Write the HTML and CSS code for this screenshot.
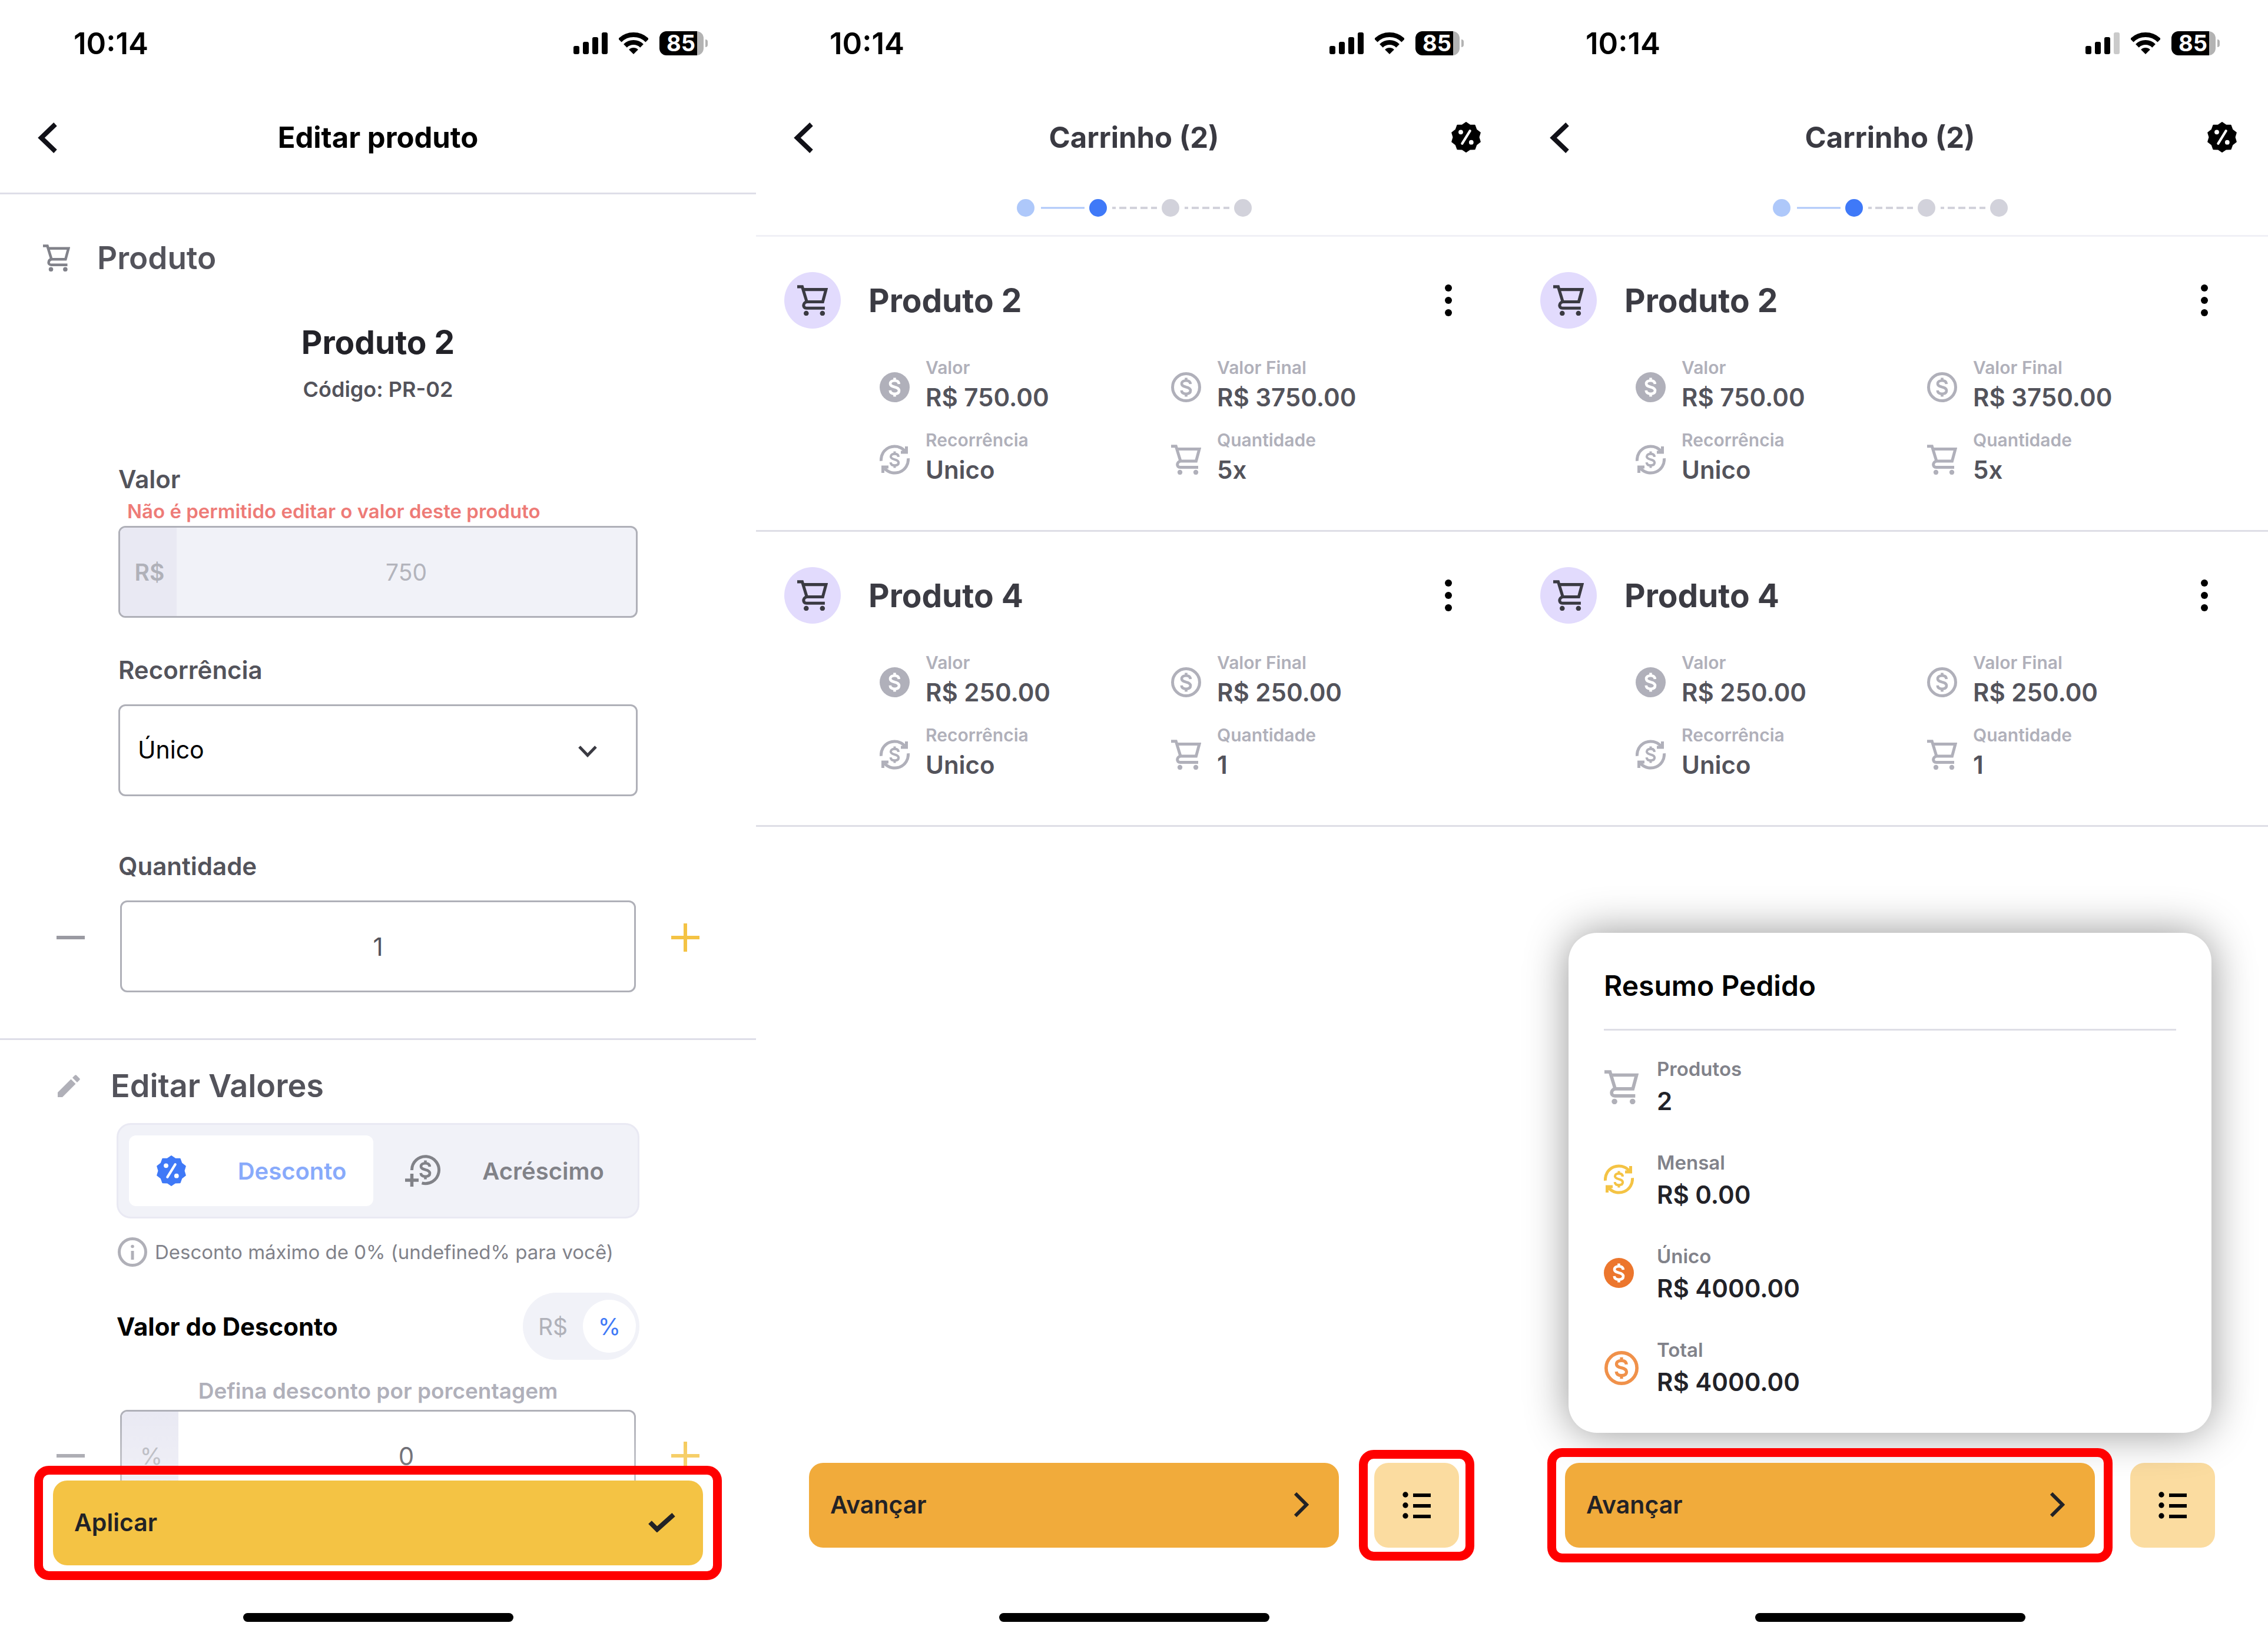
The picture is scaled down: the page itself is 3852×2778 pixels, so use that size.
FILE: index.html
```html
<!DOCTYPE html>
<html lang="pt-BR">
<head>
<meta charset="utf-8">
<meta name="viewport" content="width=device-width, initial-scale=1">
<title>Carrinho</title>
<link rel="stylesheet" href="styles.css">
</head>
<body>
<svg class="sprite" aria-hidden="true">
  <symbol id="back" viewBox="0 0 34 52"><path d="M30 3 6 26 30 49" fill="none" stroke="currentColor" stroke-width="8"/></symbol>
  <symbol id="dollar" viewBox="0 0 51 51"><path d="M32.8 20.2C32.6 16.200 30 14.300 25.500 14.300 21 14.300 18 16.200 18 19.500 18 23.300 22 24.200 25.500 25.200 30 26.300 33 27.600 33 31.300 33 35 30 36.700 25.500 36.700 21 36.700 18 34.800 17.700 30.800M25.500 9.500V14M25.500 37V41.500" fill="none" stroke="currentColor" stroke-width="4.600"/></symbol>
  <symbol id="cart" viewBox="0 0 51 51"><g fill="none" stroke="currentColor" stroke-width="5"><path d="M0 2.800H8.300L16 28"/><path d="M9.500 7.500H48L42.500 28H16C9.500 29 8.500 38.500 15.500 38.500H46"/></g><circle cx="15" cy="47" r="4.200"/><circle cx="42" cy="47" r="4.200"/></symbol>
  <symbol id="coin" viewBox="0 0 51 51"><circle cx="25.500" cy="25.500" r="25.500"/><use href="#dollar" width="51" height="51" color="#fff"/></symbol>
  <symbol id="ring" viewBox="0 0 51 51"><circle cx="25.500" cy="25.500" r="23" fill="none" stroke="currentColor" stroke-width="5"/><use href="#dollar" width="51" height="51"/></symbol>
  <symbol id="recur" viewBox="0 0 51 51"><g fill="none" stroke="currentColor" stroke-width="5"><path d="M2.500 27.800A23 23 0 0 1 42.500 10.500M45.500 3V13H36"/><path d="M48.500 23.200A23 23 0 0 1 8.500 40.500M5.500 48V38H15"/></g><use href="#dollar" x="3" y="3" width="45" height="45"/></symbol>
  <symbol id="badge" viewBox="0 0 52 52"><path d="M26 1 32.600 5.600 40.700 5.800 43.400 13.400 49.800 18.300 47.500 26 49.800 33.700 43.400 38.600 40.700 46.200 32.600 46.400 26 51 19.400 46.400 11.300 46.200 8.600 38.600 2.200 33.700 4.500 26 2.200 18.300 8.600 13.400 11.300 5.800 19.400 5.600Z" stroke="currentColor" stroke-width="2" stroke-linejoin="round"/><path d="M19.300 36.800 32.700 15.200" stroke="#fff" stroke-width="4.200" stroke-linecap="round"/><circle cx="17" cy="17.300" r="3.900" fill="#fff"/><circle cx="34.800" cy="34.700" r="3.900" fill="#fff"/></symbol>
  <symbol id="addcoin" viewBox="0 0 60 54"><path d="M11.500 26A23 23 0 1 1 28.500 47.900" fill="none" stroke="currentColor" stroke-width="5"/><path d="M11.500 32V54M0 43H23" stroke="currentColor" stroke-width="5.500"/><use href="#dollar" x="9" y="0" width="51" height="51"/></symbol>
  <symbol id="info" viewBox="0 0 50 50"><circle cx="25" cy="25" r="22.500" fill="none" stroke="currentColor" stroke-width="5"/><circle cx="25" cy="15.500" r="2.800"/><path d="M25 23V38" stroke="currentColor" stroke-width="5"/></symbol>
  <symbol id="pencil" viewBox="0 0 38 38"><path d="M0 30 22.500 7.500 30.500 15.500 8 38H0ZM25 5 29 1Q30.500-.5 32 1L37 6Q38.500 7.500 37 9L33 13Z"/></symbol>
  <symbol id="minus" viewBox="0 0 48 48"><path d="M0 24H48" stroke="currentColor" stroke-width="6"/></symbol>
  <symbol id="plus" viewBox="0 0 48 48"><path d="M0 24H48M24 0V48" stroke="currentColor" stroke-width="6"/></symbol>
  <symbol id="check" viewBox="0 0 46 33"><path d="M3 16 15 28 43 3" fill="none" stroke="currentColor" stroke-width="8"/></symbol>
  <symbol id="down" viewBox="0 0 32 20"><path d="M2 2 16 16.500 30 2" fill="none" stroke="currentColor" stroke-width="5"/></symbol>
  <symbol id="next" viewBox="0 0 26 42"><path d="M3 2 22 21 3 40" fill="none" stroke="currentColor" stroke-width="6"/></symbol>
  <symbol id="list" viewBox="0 0 48 46"><circle cx="5" cy="5" r="4.700"/><circle cx="5" cy="23" r="4.700"/><circle cx="5" cy="41" r="4.700"/><path d="M18 6H48M18 24H48M18 42H48" stroke="currentColor" stroke-width="6"/></symbol>
  <symbol id="kebab" viewBox="0 0 12 54"><circle cx="6" cy="6" r="6"/><circle cx="6" cy="27" r="6"/><circle cx="6" cy="48" r="6"/></symbol>
  <symbol id="wifi" viewBox="0 0 50 37"><g fill="none" stroke="currentColor"><path d="M1.700 13.700A33 33 0 0 1 48.300 13.700" stroke-width="8"/><path d="M10.900 22.900A20 20 0 0 1 39.100 22.900" stroke-width="8"/></g><path d="M25 37 17.200 29.200A11 11 0 0 1 32.800 29.200Z"/></symbol>
  <symbol id="bars" viewBox="0 0 58 37"><rect y="23" width="10" height="14" rx="3"/><rect x="16" y="16" width="10" height="21" rx="3"/><rect x="32" y="8" width="10" height="29" rx="3"/></symbol>
  <symbol id="bar4" viewBox="0 0 58 37"><rect x="48" width="10" height="37" rx="3"/></symbol>
  <symbol id="steps" viewBox="0 0 399 30"><circle cx="15" cy="15" r="15" fill="#aec8fa"/><path d="M41 15H115" stroke="#aec8fa" stroke-width="3"/><circle cx="138" cy="15" r="15" fill="#3f79f8"/><g stroke="#d2d2db" stroke-width="4" stroke-dasharray="12 6" stroke-dashoffset="6"><path d="M162 15H238M285 15H361"/></g><circle cx="261" cy="15" r="15" fill="#d2d2db"/><circle cx="384" cy="15" r="15" fill="#d2d2db"/></symbol>
</svg>

<section class="screen">
  <div class="status"><span>10:14</span><div class="signals"><svg class="i-bars"><use href="#bars"/><use href="#bar4"/></svg><svg class="i-wifi"><use href="#wifi"/></svg><span class="battery">85</span></div></div>
  <header class="topbar topbar-line"><button class="back" aria-label="Voltar"><svg class="i-back"><use href="#back"/></svg></button><h1 class="title-black">Editar produto</h1></header>
  <main class="form">
    <section class="part">
      <h2 class="part-head product-head"><svg class="i-45"><use href="#cart"/></svg>Produto</h2>
      <h3 class="product">Produto 2</h3>
      <p class="code">Código: PR-02</p>
      <div class="field">
        <label for="valor">Valor</label>
        <p class="error">Não é permitido editar o valor deste produto</p>
        <div class="box box-off"><span class="prefix prefix-bold">R$</span><input id="valor" type="text" value="750" disabled></div>
      </div>
      <div class="field field-select">
        <label for="rec">Recorrência</label>
        <div class="box"><select id="rec"><option>Único</option></select><svg class="i-down"><use href="#down"/></svg></div>
      </div>
      <label class="qty-label" for="qtd">Quantidade</label>
      <div class="counter counter-raised"><button class="minus" aria-label="Diminuir"><svg class="i-48"><use href="#minus"/></svg></button><div class="box"><input id="qtd" type="text" value="1"></div><button class="plus" aria-label="Aumentar"><svg class="i-48"><use href="#plus"/></svg></button></div>
    </section>
    <section class="values">
      <h2 class="part-head values-head"><svg class="i-38"><use href="#pencil"/></svg>Editar Valores</h2>
      <div class="tabs"><button class="tab tab-on" aria-pressed="true"><svg class="i-52"><use href="#badge"/></svg><span>Desconto</span></button><button class="tab tab-off" aria-pressed="false"><svg class="i-add"><use href="#addcoin"/></svg><span>Acréscimo</span></button></div>
      <p class="hint"><svg class="i-50"><use href="#info"/></svg>Desconto máximo de 0% (undefined% para você)</p>
      <div class="kind"><label for="desc">Valor do Desconto</label><div class="switch"><button aria-pressed="false">R$</button><button class="switch-on" aria-pressed="true">%</button></div></div>
      <p class="define">Defina desconto por porcentagem</p>
      <div class="counter"><button class="minus" aria-label="Diminuir"><svg class="i-48"><use href="#minus"/></svg></button><div class="box"><span class="prefix">%</span><input id="desc" type="text" value="0"></div><button class="plus" aria-label="Aumentar"><svg class="i-48"><use href="#plus"/></svg></button></div>
    </section>
  </main>
  <footer class="apply-bar"><div class="mark mark-apply"><button class="action apply">Aplicar<svg class="i-check"><use href="#check"/></svg></button></div><div class="home"></div></footer>
</section>

<section class="screen">
  <div class="status"><span>10:14</span><div class="signals"><svg class="i-bars"><use href="#bars"/><use href="#bar4"/></svg><svg class="i-wifi"><use href="#wifi"/></svg><span class="battery">85</span></div></div>
  <header class="topbar"><button class="back" aria-label="Voltar"><svg class="i-back"><use href="#back"/></svg></button><h1>Carrinho (2)</h1><button class="promo" aria-label="Descontos"><svg class="i-52"><use href="#badge"/></svg></button></header>
  <div class="stepper"><svg class="i-steps" role="img" aria-label="Etapa 2 de 4"><use href="#steps"/></svg></div>
  <main class="cart">
    <article class="item">
      <div class="item-head"><span class="avatar"><svg class="i-52"><use href="#cart"/></svg></span><h2>Produto 2</h2><button aria-label="Opções"><svg class="i-kebab"><use href="#kebab"/></svg></button></div>
      <div class="specs">
        <div class="spec"><svg class="i-51"><use href="#coin"/></svg><p><span>Valor</span><strong>R$ 750.00</strong></p></div>
        <div class="spec"><svg class="i-51"><use href="#ring"/></svg><p><span>Valor Final</span><strong>R$ 3750.00</strong></p></div>
        <div class="spec"><svg class="i-51"><use href="#recur"/></svg><p><span>Recorrência</span><strong>Unico</strong></p></div>
        <div class="spec"><svg class="i-51"><use href="#cart"/></svg><p><span>Quantidade</span><strong>5x</strong></p></div>
      </div>
    </article>
    <article class="item">
      <div class="item-head"><span class="avatar"><svg class="i-52"><use href="#cart"/></svg></span><h2>Produto 4</h2><button aria-label="Opções"><svg class="i-kebab"><use href="#kebab"/></svg></button></div>
      <div class="specs">
        <div class="spec"><svg class="i-51"><use href="#coin"/></svg><p><span>Valor</span><strong>R$ 250.00</strong></p></div>
        <div class="spec"><svg class="i-51"><use href="#ring"/></svg><p><span>Valor Final</span><strong>R$ 250.00</strong></p></div>
        <div class="spec"><svg class="i-51"><use href="#recur"/></svg><p><span>Recorrência</span><strong>Unico</strong></p></div>
        <div class="spec"><svg class="i-51"><use href="#cart"/></svg><p><span>Quantidade</span><strong>1</strong></p></div>
      </div>
    </article>
  </main>
  <footer class="cart-bar"><div class="actions"><div><button class="action advance">Avançar<svg class="i-next"><use href="#next"/></svg></button></div><div class="mark mark-list"><button class="summary" aria-label="Resumo"><svg class="i-list"><use href="#list"/></svg></button></div></div><div class="home"></div></footer>
</section>

<section class="screen">
  <div class="status"><span>10:14</span><div class="signals"><svg class="i-bars"><use href="#bars"/><use href="#bar4" class="weak"/></svg><svg class="i-wifi"><use href="#wifi"/></svg><span class="battery">85</span></div></div>
  <header class="topbar"><button class="back" aria-label="Voltar"><svg class="i-back"><use href="#back"/></svg></button><h1>Carrinho (2)</h1><button class="promo" aria-label="Descontos"><svg class="i-52"><use href="#badge"/></svg></button></header>
  <div class="stepper"><svg class="i-steps" role="img" aria-label="Etapa 2 de 4"><use href="#steps"/></svg></div>
  <main class="cart">
    <article class="item">
      <div class="item-head"><span class="avatar"><svg class="i-52"><use href="#cart"/></svg></span><h2>Produto 2</h2><button aria-label="Opções"><svg class="i-kebab"><use href="#kebab"/></svg></button></div>
      <div class="specs">
        <div class="spec"><svg class="i-51"><use href="#coin"/></svg><p><span>Valor</span><strong>R$ 750.00</strong></p></div>
        <div class="spec"><svg class="i-51"><use href="#ring"/></svg><p><span>Valor Final</span><strong>R$ 3750.00</strong></p></div>
        <div class="spec"><svg class="i-51"><use href="#recur"/></svg><p><span>Recorrência</span><strong>Unico</strong></p></div>
        <div class="spec"><svg class="i-51"><use href="#cart"/></svg><p><span>Quantidade</span><strong>5x</strong></p></div>
      </div>
    </article>
    <article class="item">
      <div class="item-head"><span class="avatar"><svg class="i-52"><use href="#cart"/></svg></span><h2>Produto 4</h2><button aria-label="Opções"><svg class="i-kebab"><use href="#kebab"/></svg></button></div>
      <div class="specs">
        <div class="spec"><svg class="i-51"><use href="#coin"/></svg><p><span>Valor</span><strong>R$ 250.00</strong></p></div>
        <div class="spec"><svg class="i-51"><use href="#ring"/></svg><p><span>Valor Final</span><strong>R$ 250.00</strong></p></div>
        <div class="spec"><svg class="i-51"><use href="#recur"/></svg><p><span>Recorrência</span><strong>Unico</strong></p></div>
        <div class="spec"><svg class="i-51"><use href="#cart"/></svg><p><span>Quantidade</span><strong>1</strong></p></div>
      </div>
    </article>
  </main>
  <aside class="sheet">
    <h2>Resumo Pedido</h2>
    <div class="totals">
      <div class="total grey"><svg class="i-58"><use href="#cart"/></svg><p><span>Produtos</span><strong>2</strong></p></div>
      <div class="total yellow"><svg class="i-51"><use href="#recur"/></svg><p><span>Mensal</span><strong>R$ 0.00</strong></p></div>
      <div class="total deep"><svg class="i-51"><use href="#coin"/></svg><p><span>Único</span><strong>R$ 4000.00</strong></p></div>
      <div class="total orange"><svg class="i-58"><use href="#ring"/></svg><p><span>Total</span><strong>R$ 4000.00</strong></p></div>
    </div>
  </aside>
  <footer class="cart-bar"><div class="actions"><div class="mark mark-advance"><button class="action advance">Avançar<svg class="i-next"><use href="#next"/></svg></button></div><div><button class="summary" aria-label="Resumo"><svg class="i-list"><use href="#list"/></svg></button></div></div><div class="home"></div></footer>
</section>
</body>
</html>
```
FILE: styles.css
```css
* { box-sizing: border-box; }
body {
  margin: 0;
  display: grid;
  grid-template-columns: repeat(3, minmax(0, 1fr));
  background: #fff;
  color: #53535b;
  font-family: Inter, "Liberation Sans", sans-serif;
}
h1, h2, h3, p { margin: 0; }
button { margin: 0; padding: 0; border: 0; background: none; color: inherit; font: inherit; }
svg { display: block; flex: none; fill: currentColor; }
.sprite { position: absolute; width: 0; height: 0; }

.i-bars { width: 58px; height: 37px; }
.i-wifi { width: 50px; height: 37px; }
.i-back { width: 34px; height: 52px; }
.i-38 { width: 38px; height: 38px; }
.i-45 { width: 46px; height: 46px; }
.i-48 { width: 48px; height: 48px; }
.i-50 { width: 50px; height: 50px; }
.i-51 { width: 51px; height: 51px; }
.i-52 { width: 52px; height: 52px; }
.i-58 { width: 58px; height: 58px; }
.i-add { width: 60px; height: 54px; }
.i-check { width: 46px; height: 33px; }
.i-down { width: 32px; height: 20px; }
.i-next { width: 26px; height: 42px; }
.i-list { width: 48px; height: 46px; }
.i-kebab { width: 12px; height: 54px; }
.i-steps { width: 399px; height: 30px; }
.weak { color: #cacaca; fill: #cacaca; }

.screen { position: relative; display: flex; flex-direction: column; height: 100vh; overflow: hidden; }

/* status bar */
.status {
  display: flex; flex: none; align-items: center; justify-content: space-between;
  height: 146px; padding: 0 82px 0 125px;
  color: #000; font-size: 51px; font-weight: 600;
}
.signals { display: flex; align-items: center; gap: 19px; }
.battery {
  position: relative; width: 75px; height: 41px; margin-right: 7px; border-radius: 12px;
  background: linear-gradient(90deg, #000 64px, #b3b3b3 64px);
  color: #fff; font-size: 38px; font-weight: 700; line-height: 41px; padding-left: 12px;
}
.battery::after {
  content: ""; position: absolute; right: -7px; top: 14px; width: 4px; height: 13px;
  border-radius: 0 6px 6px 0; background: #b3b3b3;
}

/* title bar */
.topbar { display: grid; flex: none; grid-template-columns: 1fr auto 1fr; align-items: center; height: 175px; padding: 0 52px; color: #3a3a42; }
.topbar h1 { font-size: 49px; font-weight: 700; line-height: 60px; }
.topbar .title-black { color: #000; }
.topbar-line { height: 184px; padding-bottom: 6px; border-bottom: 3px solid #dedee8; }
.back { justify-self: start; padding-left: 12px; color: #111118; }
.promo { justify-self: end; padding-bottom: 2px; color: #000; }
.stepper { display: flex; flex: none; justify-content: center; padding: 17px 0 31px; border-bottom: 3px solid #f0f0f6; }

/* edit form */
.form { flex: 1; min-height: 0; }
.part { padding: 75px 0 78px; border-bottom: 3px solid #dedee8; }
.part-head { display: flex; align-items: center; gap: 46px; padding-left: 73px; font-size: 54px; font-weight: 600; line-height: 66px; }
.product-head { font-size: 53px; }
.part-head svg { color: #81828a; }
.product { margin-top: 77px; text-align: center; color: #222228; font-size: 55px; font-weight: 700; line-height: 66px; }
.code { margin-top: 23px; text-align: center; font-size: 36px; font-weight: 600; line-height: 48px; }
.field { padding: 0 201px; margin-top: 105px; }
.field label, .qty-label { display: block; font-size: 42px; font-weight: 600; line-height: 48px; }
.error { margin-top: 9px; padding-left: 15px; color: #ee7b77; font-size: 33px; font-weight: 600; line-height: 42px; }
.box { display: flex; align-items: center; height: 156px; border: 3px solid #afb0b8; border-radius: 12px; overflow: hidden; background: #fff; }
.error + .box { margin-top: 4px; }
.box-off { background: #f1f2f8; }
.prefix { flex: none; width: 96px; align-self: stretch; display: flex; align-items: center; justify-content: center; padding-left: 4px; background: #e9e9f3; color: #b0b1b9; font-size: 39px; }
.prefix-bold { font-weight: 600; }
.box input { flex: 1; min-width: 0; height: 100%; padding: 0; border: 0; background: none; text-align: center; color: #53535b; font: 400 42px Inter, sans-serif; }
.box input:disabled { color: #b3b4bc; font-size: 39px; }
.field-select { margin-top: 65px; }
.field-select .box { margin-top: 34px; padding-right: 66px; }
.box select { flex: 1; height: 100%; padding: 0 0 2px 30px; border: 0; background: none; appearance: none; color: #000; font: 400 41px Inter, sans-serif; }
.i-down { margin-top: 3px; color: #3a3a42; }
.qty-label { margin: 95px 201px 34px; }
.counter { display: grid; grid-template-columns: 48px 1fr 48px; align-items: center; gap: 60px; padding: 0 96px; }
.counter-raised button { padding-bottom: 30px; }
.minus { color: #9a9aa2; }
.plus { color: #f4c344; }

.values { padding-top: 45px; }
.values-head { gap: 52px; padding-left: 98px; }
.values-head svg { color: #b0b0b8; }
.tabs { display: flex; margin: 30px 198px 0; padding: 18px; height: 162px; border: 3px solid #e9e9f3; border-radius: 24px; background: #f1f2f8; font-size: 40px; font-weight: 600; }
.tab { display: flex; align-items: center; width: 415px; border-radius: 12px; }
.tab span { flex: 1; text-align: center; }
.tab-on { padding: 0 18px 0 46px; background: #fff; color: #3f79f7; }
.tab-on span { color: #88aafb; padding-left: 67px; padding-right: 8px; }
.tab-off { padding: 0 0 0 54px; color: #818288; }
.tab-off span { padding-left: 60px; padding-right: 12px; }
.hint { display: flex; align-items: center; gap: 13px; margin: 32px 180px 0 200px; color: #81828a; font-size: 33px; font-weight: 400; line-height: 50px; }
.hint svg { color: #b0b0b8; }
.kind { display: flex; align-items: center; justify-content: space-between; margin: 44px 198px 0 198px; color: #000; font-size: 42px; font-weight: 700; }
.switch { display: flex; align-items: center; padding: 12px 6px 12px 0; width: 198px; height: 114px; border-radius: 57px; background: #f1f2f8; color: #b0b1b9; font-size: 39px; font-weight: 400; }
.switch button { flex: 1; height: 90px; }
.switch .switch-on { flex: none; width: 90px; border-radius: 50%; background: #fff; color: #3f79f7; }
.define { margin: 29px 0 8px; text-align: center; color: #b0b0ba; font-size: 37px; font-weight: 600; line-height: 48px; }

/* bottom bars */
.apply-bar {
  position: absolute; left: 0; right: 0; bottom: 0; padding: 120px 90px 24px;
  background: linear-gradient(rgba(255, 255, 255, 0), rgba(255, 255, 255, .3) 120px, #fff 180px);
}
.apply-bar .home { margin-top: 81px; }
.cart-bar { flex: none; padding: 0 90px 24px; }
.cart-bar .home { margin-top: 111px; }
.home { width: 459px; height: 15px; margin: 0 auto; border-radius: 8px; background: #000; }
.actions { display: grid; grid-template-columns: 1fr 144px; gap: 60px; }
.action { display: flex; align-items: center; justify-content: space-between; width: 100%; height: 144px; padding: 0 51px 2px 36px; border-radius: 24px; color: #222226; font-size: 41px; font-weight: 600; }
.apply { padding-right: 47px; background: #f4c344; }
.advance { background: #f1ab3b; }
.summary { display: grid; place-items: center; width: 144px; height: 144px; border-radius: 24px; background: #fbdca0; color: #000; }
.mark { position: relative; }
.mark::after { content: ""; position: absolute; border: 15px solid #f00; border-radius: 25px; pointer-events: none; }
.mark-apply::after { inset: -25px -32px; }
.mark-list::after { inset: -22px -26px; }
.mark-advance::after { inset: -25px -30px; }

/* cart */
.cart { flex: 1; min-height: 0; }
.item { padding: 60px 0 66px; border-bottom: 3px solid #dedee6; }
.item-head { display: flex; align-items: center; gap: 47px; padding: 0 102px 0 48px; }
.avatar { display: grid; place-items: center; width: 96px; height: 96px; border-radius: 50%; background: #e2dbfd; color: #3a3a42; }
.item-head h2 { flex: 1; color: #3b3b43; font-size: 55px; font-weight: 700; line-height: 66px; }
.item-head button { color: #000; }
.specs { display: grid; grid-template-columns: 1fr 1fr; row-gap: 15px; margin-top: 45px; padding: 0 84px 0 210px; }
.spec { display: flex; align-items: center; gap: 27px; color: #b0b0ba; }
.spec p { padding-bottom: 9px; }
.spec span, .spec strong, .total span, .total strong { display: block; }
.spec span { font-size: 30px; font-weight: 600; line-height: 42px; }
.spec strong { margin-top: 3px; color: #53535b; font-size: 42px; font-weight: 600; line-height: 54px; }

/* order summary */
.sheet { position: absolute; left: 96px; right: 96px; bottom: 345px; padding: 60px 60px 59px; border-radius: 48px; background: #fff; box-shadow: 0 0 72px rgba(0, 0, 0, .42); }
.sheet h2 { padding-bottom: 43px; border-bottom: 3px solid #dedee6; color: #000; font-size: 48px; font-weight: 600; line-height: 60px; }
.totals { display: flex; flex-direction: column; gap: 56px; margin-top: 44px; }
.total { display: grid; grid-template-columns: 60px 1fr; align-items: center; gap: 30px; }
.total .i-51 { margin-bottom: 4px; }
.total .i-58 { justify-self: center; }
.total span { color: #81828a; font-size: 33px; font-weight: 600; line-height: 42px; }
.total strong { margin-top: 7px; color: #222228; font-size: 42px; font-weight: 600; line-height: 54px; }
.grey { color: #b0b0b8; }
.yellow { color: #f4c344; }
.deep { color: #ec762d; }
.orange { color: #f0914a; }
```
